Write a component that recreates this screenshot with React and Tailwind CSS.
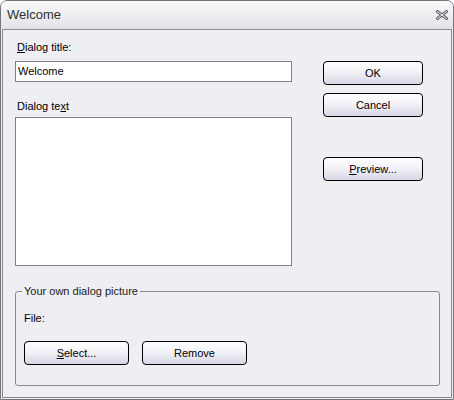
import React from "react";

const Btn = ({ children, className = "" }) => (
  <button
    className={`w-[100px] h-[24px] rounded-[4px] border border-black bg-gradient-to-b from-white via-[#f0f0f6] to-[#d7d7e6] text-[11px] text-black leading-none ${className}`}
  >
    {children}
  </button>
);

export default function App() {
  return (
    <div
      className="w-[454px] h-[400px] bg-[#eeeef2] border border-[#75767c] rounded-t-[7px] flex flex-col overflow-hidden"
      style={{ fontFamily: '"Liberation Sans", Arial, sans-serif' }}
    >
      {/* title bar */}
      <div className="h-[28px] shrink-0 flex items-center justify-between pl-[6px] pr-[5px] bg-gradient-to-b from-[#f9f9fa] to-[#e2e3e7]">
        <span className="text-[13px] text-[#303030]">Welcome</span>
        <svg width="12" height="10" viewBox="0 0 12 10">
          <path
            d="M1.5 1.5 L10.5 8.5 M10.5 1.5 L1.5 8.5"
            stroke="#5f6270"
            strokeWidth="3"
            strokeLinecap="square"
          />
          <path
            d="M1.5 1.5 L10.5 8.5 M10.5 1.5 L1.5 8.5"
            stroke="#f4f4f6"
            strokeWidth="1"
            strokeLinecap="square"
          />
        </svg>
      </div>

      {/* client area */}
      <div className="flex-1 mx-[1px] mb-[1px] border border-[#8a8b92] bg-[#eeeef3] flex flex-col pl-[12px] pr-[11px]">
        <div className="flex">
          <div className="w-[277px] flex flex-col">
            <div className="mt-[11px] h-[13px] text-[11px] leading-[13px] text-black pl-[2px]">
              <u>D</u>ialog title:
            </div>
            <div className="mt-[7px] h-[21px] border border-[#808086] bg-white text-[11px] leading-[19px] pl-[2px] text-black">
              Welcome
            </div>
            <div className="mt-[18px] h-[13px] text-[11px] leading-[13px] text-black pl-[2px]">
              Dialog te<u>x</u>t
            </div>
            <div className="mt-[4px] h-[149px] border border-[#808086] bg-white" />
          </div>
          <div className="ml-[31px] mt-[31px] flex flex-col">
            <Btn>OK</Btn>
            <Btn className="mt-[8px]">Cancel</Btn>
            <Btn className="mt-[40px]">
              <u>P</u>review...
            </Btn>
          </div>
        </div>

        <fieldset className="mt-[19px] w-[425px] h-[101px] border border-[#88898f] rounded-[3px] px-[6px]">
          <legend className="px-[2px] text-[11px] leading-[13px] text-[#202020]">
            Your own dialog picture
          </legend>
          <div className="pl-[2px]">
            <div className="mt-[14px] text-[11px] leading-[13px] text-black">File:</div>
            <div className="mt-[16px] flex gap-[13px]">
              <Btn className="w-[105px]">
                <u>S</u>elect...
              </Btn>
              <Btn className="w-[105px]">Remove</Btn>
            </div>
          </div>
        </fieldset>
      </div>
    </div>
  );
}
